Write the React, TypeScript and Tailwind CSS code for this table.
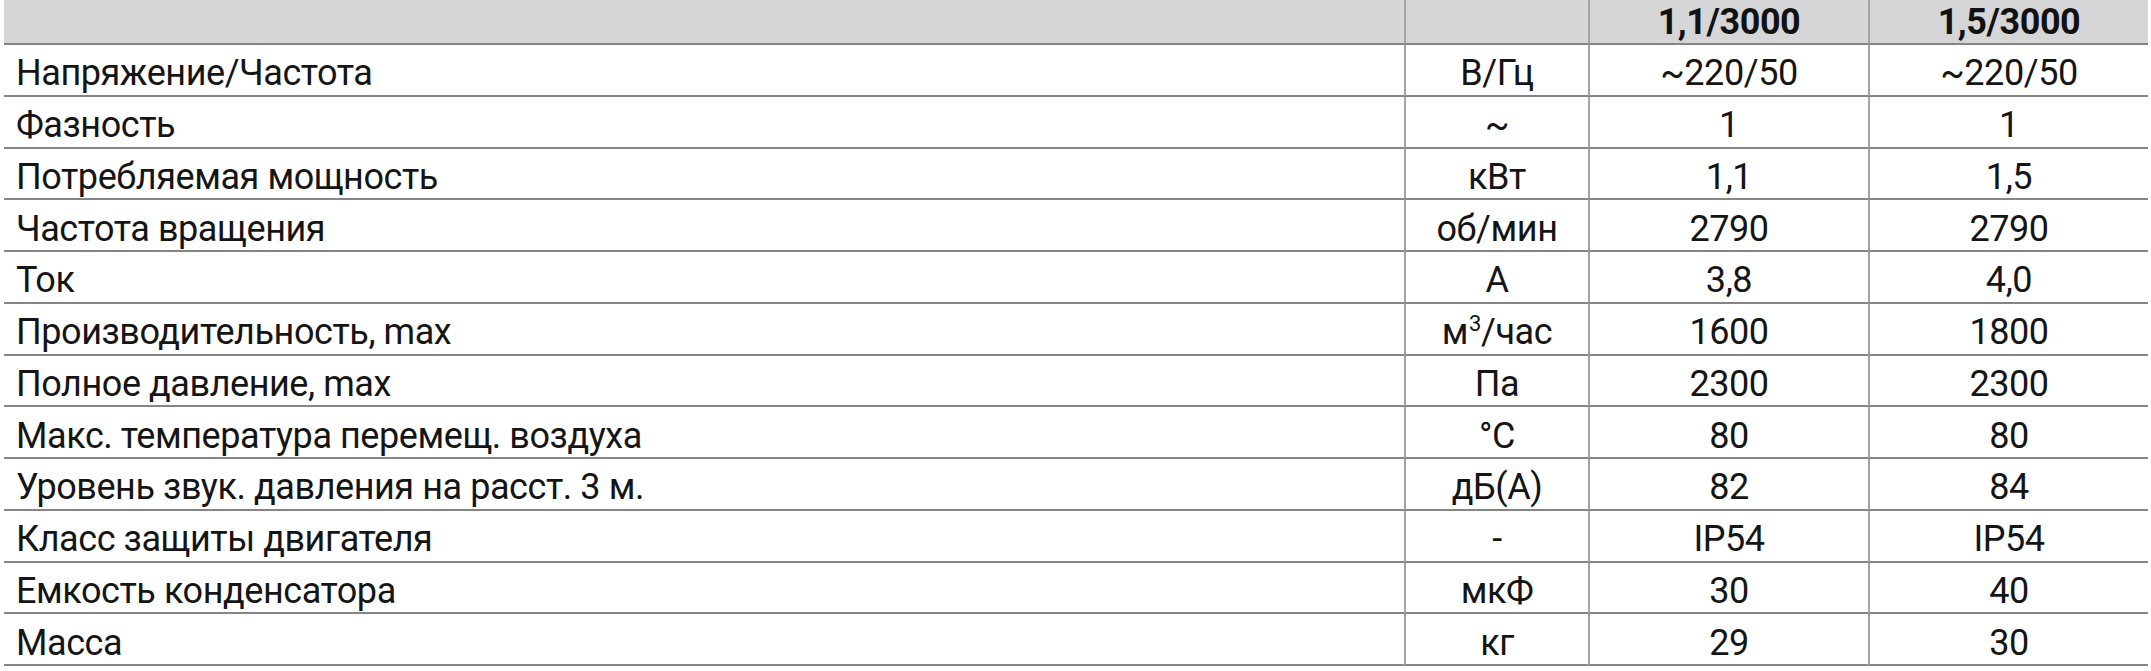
import React from "react";

type Row = { name: React.ReactNode; unit: React.ReactNode; a: string; b: string };

const rows: Row[] = [
  { name: "Напряжение/Частота", unit: "В/Гц", a: "~220/50", b: "~220/50" },
  { name: "Фазность", unit: "~", a: "1", b: "1" },
  { name: "Потребляемая мощность", unit: "кВт", a: "1,1", b: "1,5" },
  { name: "Частота вращения", unit: "об/мин", a: "2790", b: "2790" },
  { name: "Ток", unit: "А", a: "3,8", b: "4,0" },
  {
    name: "Производительность, max",
    unit: (
      <span>
        м<sup className="text-[22px] top-[-13px] ml-[1px]">3</sup>/час
      </span>
    ),
    a: "1600",
    b: "1800",
  },
  { name: "Полное давление, max", unit: "Па", a: "2300", b: "2300" },
  { name: "Макс. температура перемещ. воздуха", unit: "°С", a: "80", b: "80" },
  { name: "Уровень звук. давления на расст. 3 м.", unit: "дБ(А)", a: "82", b: "84" },
  { name: "Класс защиты двигателя", unit: "-", a: "IP54", b: "IP54" },
  { name: "Емкость конденсатора", unit: "мкФ", a: "30", b: "40" },
  { name: "Масса", unit: "кг", a: "29", b: "30" },
];

export default function App() {
  return (
    <div
      className="w-[2151px] h-[671px] bg-white pl-[4px] text-[#151515]"
      style={{ fontFamily: "Roboto, 'Liberation Sans', sans-serif" }}
    >
      <div className="grid grid-cols-[1400px_184px_280px_280px] text-[36px] tracking-[-0.012em]">
        {/* header */}
        <div className="h-[45px] bg-[#d6d6d8] border-b-2 border-[#858585]" />
        <div className="h-[45px] bg-[#d6d6d8] border-b-2 border-b-[#858585] border-l-2 border-l-[#a3a3a3]" />
        <div className="h-[45px] bg-[#d6d6d8] border-b-2 border-b-[#858585] border-l-2 border-l-[#a3a3a3] flex items-center justify-center font-bold text-[#111]">
          1,1/3000
        </div>
        <div className="h-[45px] bg-[#d6d6d8] border-b-2 border-b-[#858585] border-l-2 border-l-[#a3a3a3] flex items-center justify-center font-bold text-[#111]">
          1,5/3000
        </div>
        {rows.map((r, i) => (
          <React.Fragment key={i}>
            <div className="h-[51.75px] border-b-2 border-[#858585] flex items-center pl-[12px] pt-[7px]">
              {r.name}
            </div>
            <div className="h-[51.75px] border-b-2 border-b-[#858585] border-l-2 border-l-[#a3a3a3] flex items-center justify-center pt-[7px]">
              {r.unit}
            </div>
            <div className="h-[51.75px] border-b-2 border-b-[#858585] border-l-2 border-l-[#a3a3a3] flex items-center justify-center pt-[7px]">
              {r.a}
            </div>
            <div className="h-[51.75px] border-b-2 border-b-[#858585] border-l-2 border-l-[#a3a3a3] flex items-center justify-center pt-[7px]">
              {r.b}
            </div>
          </React.Fragment>
        ))}
      </div>
    </div>
  );
}
